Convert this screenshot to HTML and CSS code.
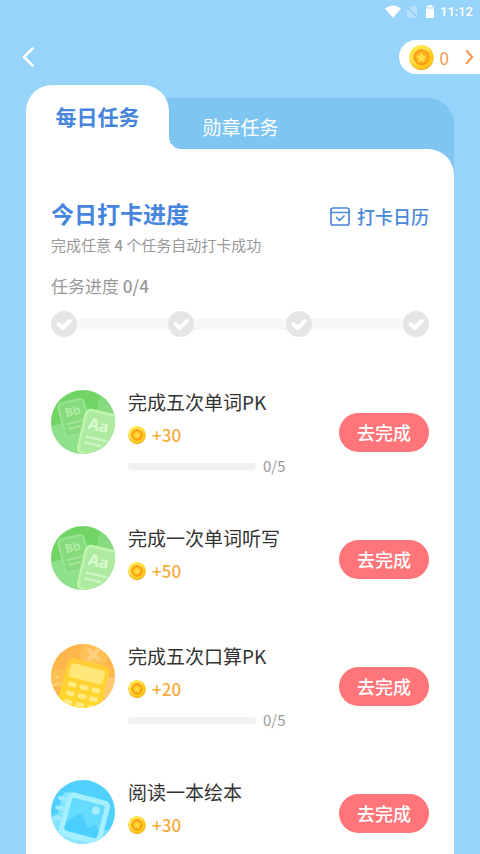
FILE: index.html
```html
<!DOCTYPE html>
<html lang="zh-CN">
<head>
<meta charset="utf-8">
<meta name="viewport" content="width=device-width, initial-scale=1">
<title>每日任务</title>
<link rel="stylesheet" href="styles.css">
</head>
<body>
<svg class="defs" aria-hidden="true">
  <defs>
    <linearGradient id="gold" x1="0" y1="0" x2="1" y2="1">
      <stop offset="0.3" stop-color="#ffe545"/>
      <stop offset="0.7" stop-color="#ffc916"/>
    </linearGradient>
    <linearGradient id="calc" x1="0" y1="0" x2="0" y2="1">
      <stop offset="0" stop-color="#ffcd38"/>
      <stop offset="1" stop-color="#ffdc24"/>
    </linearGradient>
    <clipPath id="disc"><circle cx="32" cy="32" r="32"/></clipPath>
    <symbol id="coin" viewBox="0 0 24 24">
      <circle cx="12" cy="12.5" r="11.5" fill="#e8a31c"/>
      <circle cx="12" cy="11.5" r="11.5" fill="url(#gold)"/>
      <path d="M3 15 16 2l4 3L6 19z" fill="#fff07a" opacity=".5"/>
      <circle cx="12" cy="11.800" r="6.800" fill="#fdb51d" stroke="#f99d18" stroke-width="2"/>
      <path d="m12 8 1.300 2.500 2.800.4-2 2 .4 2.800-2.500-1.300-2.500 1.300.4-2.800-2-2 2.800-.4z" fill="#ffdd45" stroke="#ffdd45" stroke-width="1" stroke-linejoin="round"/>
    </symbol>
    <symbol id="step" viewBox="0 0 26 26">
      <circle cx="13" cy="13" r="13" fill="#e5e5e5"/>
      <path d="m7.500 13 4 4 7.500-7" fill="none" stroke="#fff" stroke-width="4" stroke-linecap="round" stroke-linejoin="round"/>
    </symbol>
    <symbol id="words" viewBox="0 0 64 64">
      <g clip-path="url(#disc)">
        <path d="M0 0h64v64H0z" fill="#70d565"/>
        <circle cx="60" cy="17" r="14" fill="#85db7e"/>
        <circle cx="10" cy="54" r="20" fill="#8fe08a"/>
        <g transform="rotate(-14 6 14)">
          <rect x="6.500" y="14.500" width="26" height="34" rx="4" fill="#86db7d" stroke="#9be392" stroke-width="2"/>
          <text x="19.500" y="29" text-anchor="middle" class="glyph" fill="#b0eca5">Bb</text>
          <path d="M12 36h15M12 41h11" stroke="#a5e69b" stroke-width="2" stroke-linecap="round"/>
        </g>
        <g transform="rotate(13 36 19)">
          <rect x="36" y="19" width="32" height="44" rx="5" fill="#aeeba1" stroke="#c0f5ae" stroke-width="2.500"/>
          <text x="51" y="38" text-anchor="middle" class="glyph glyph-large" fill="#dafbd1">Aa</text>
          <path d="M42 46h20M42 52h15" stroke="#cdf7c1" stroke-width="2.500" stroke-linecap="round"/>
        </g>
      </g>
    </symbol>
    <symbol id="sums" viewBox="0 0 64 64">
      <g clip-path="url(#disc)">
        <path d="M0 0h64v64H0z" fill="#ffb74d"/>
        <circle cx="43" cy="10" r="14" fill="#ffc057"/>
        <circle cx="8" cy="34" r="9" fill="#ffc052"/>
        <circle cx="61" cy="45" r="12" fill="#ffc974"/>
        <path d="m38 6 9 9m0-9-9 9" stroke="#ffcf80" stroke-width="4" stroke-linecap="round"/>
        <path d="M2 42q6-4 10-2" fill="none" stroke="#ffd17c" stroke-width="2"/>
        <circle cx="6" cy="33" r="1.500" fill="#ffd884"/>
        <g transform="rotate(14 18 13)">
          <rect x="18" y="13" width="43" height="60" rx="6" fill="url(#calc)"/>
          <rect x="22" y="18" width="35" height="14" rx="3" fill="#ffe779"/>
          <path d="M26 39h4M38 39h4M50 39h4M26 48h4M38 48h4M50 48h4M26 57h4M38 57h4M50 57h4" stroke="#ffea83" stroke-width="5" stroke-linecap="round"/>
        </g>
      </g>
    </symbol>
    <symbol id="picture" viewBox="0 0 64 64">
      <g clip-path="url(#disc)">
        <path d="M0 0h64v64H0z" fill="#50d1fd"/>
        <circle cx="18" cy="56" r="25" fill="#8fe7ff"/>
        <path d="M30 50h34v14H30z" fill="#8fe7ff" opacity=".7"/>
        <g transform="rotate(15 18 11)">
          <rect x="13" y="12" width="12" height="46" rx="5" fill="#83e3ff"/>
          <rect x="18" y="11" width="44" height="45" rx="6" fill="#a6efff"/>
          <rect x="23" y="16" width="34" height="34" rx="3" fill="#64dbff"/>
          <path d="M23 42 33 31q3-2 5 1l8 10 4-4q2-2 4 0l3 4v5q0 3-3 3H26q-3 0-3-3z" fill="#4bcfff"/>
          <circle cx="49" cy="23" r="4" fill="#a6efff"/>
          <path d="M11 20h6M11 30h6M11 40h6" stroke="#9cebff" stroke-width="4" stroke-linecap="round"/>
        </g>
      </g>
    </symbol>
  </defs>
</svg>

<div class="status">
  <svg class="status-icon" viewBox="0 0 16 14" aria-hidden="true"><path d="M0 3.500Q8-2.500 16 3.500L8 13z" fill="#fff"/></svg>
  <svg class="status-icon sim" viewBox="0 0 12 14" aria-hidden="true"><path d="M4 1h7v12H1V4z" fill="#b5e0fc"/><path d="m0 1 12 12" stroke="#8acbf5" stroke-width="1.500"/></svg>
  <svg class="status-icon battery" viewBox="0 0 8 14" aria-hidden="true"><path d="M2 0h4v1.500h2V13H0V1.500h2z" fill="#fff"/><path d="M0 1.500h8V4H0z" fill="#d4edfd"/></svg>
  <time>11:12</time>
</div>

<header class="bar">
  <button class="back" type="button" aria-label="返回">
    <svg viewBox="0 0 12 20" aria-hidden="true"><path d="M10.500 1.500 2 10l8.500 8.500" fill="none" stroke="#fff" stroke-width="2.500" stroke-linecap="round" stroke-linejoin="round"/></svg>
  </button>
  <a class="wallet" href="#coins">
    <svg class="wallet-coin" aria-hidden="true"><use href="#coin"/></svg>
    <span>0</span>
    <svg class="wallet-arrow" viewBox="0 0 8 13" aria-hidden="true"><path d="m1.500 1 5 5.500-5 5.500" fill="none" stroke="#f09a50" stroke-width="2" stroke-linecap="round" stroke-linejoin="round"/></svg>
  </a>
</header>

<main class="sheet">
  <nav class="tabs">
    <button class="tab active" type="button">每日任务</button>
    <button class="tab" type="button">勋章任务</button>
  </nav>

  <div class="panel">
    <section class="progress">
      <div class="heading">
        <h1>今日打卡进度</h1>
        <a class="calendar" href="#calendar">
          <svg viewBox="0 0 20 19" aria-hidden="true"><g fill="none" stroke="#4a88d9" stroke-width="1.700" stroke-linecap="round" stroke-linejoin="round"><rect x="1" y="1" width="18" height="17" rx="2"/><path d="M1 5.500h18M6.500 10.500l3 3 4.500-4.500"/></g></svg>
          <span>打卡日历</span>
        </a>
      </div>
      <p class="hint">完成任意 <b>4</b> 个任务自动打卡成功</p>
      <p class="count">任务进度 <b>0/4</b></p>
      <div class="steps">
        <svg aria-hidden="true"><use href="#step"/></svg>
        <svg aria-hidden="true"><use href="#step"/></svg>
        <svg aria-hidden="true"><use href="#step"/></svg>
        <svg aria-hidden="true"><use href="#step"/></svg>
      </div>
    </section>

    <ul class="tasks">
      <li class="task">
        <svg class="badge" aria-hidden="true"><use href="#words"/></svg>
        <div class="info">
          <h2>完成五次单词PK</h2>
          <p class="reward"><svg aria-hidden="true"><use href="#coin"/></svg>+30</p>
          <p class="meter"><span class="track"></span>0/5</p>
        </div>
        <button class="go" type="button">去完成</button>
      </li>
      <li class="task">
        <svg class="badge" aria-hidden="true"><use href="#words"/></svg>
        <div class="info">
          <h2>完成一次单词听写</h2>
          <p class="reward"><svg aria-hidden="true"><use href="#coin"/></svg>+50</p>
        </div>
        <button class="go" type="button">去完成</button>
      </li>
      <li class="task">
        <svg class="badge" aria-hidden="true"><use href="#sums"/></svg>
        <div class="info">
          <h2>完成五次口算PK</h2>
          <p class="reward"><svg aria-hidden="true"><use href="#coin"/></svg>+20</p>
          <p class="meter"><span class="track"></span>0/5</p>
        </div>
        <button class="go" type="button">去完成</button>
      </li>
      <li class="task">
        <svg class="badge" aria-hidden="true"><use href="#picture"/></svg>
        <div class="info">
          <h2>阅读一本绘本</h2>
          <p class="reward"><svg aria-hidden="true"><use href="#coin"/></svg>+30</p>
        </div>
        <button class="go" type="button">去完成</button>
      </li>
    </ul>
  </div>
</main>
</body>
</html>
```

FILE: styles.css
```css
* {
  box-sizing: border-box;
}

body {
  margin: 0;
  min-height: 100vh;
  display: flex;
  flex-direction: column;
  background: #97d4fb;
  color: #333;
  font-family: "Noto Sans CJK SC", sans-serif;
}

h1, h2, p, ul {
  margin: 0;
  padding: 0;
}

button {
  border: 0;
  padding: 0;
  background: none;
  font-family: inherit;
}

a {
  text-decoration: none;
}

svg {
  display: block;
  flex: none;
}

.defs {
  position: absolute;
  width: 0;
  height: 0;
}

.glyph {
  font: bold 12px "Noto Sans", sans-serif;
}

.glyph-large {
  font-size: 16px;
}

.status {
  display: flex;
  justify-content: flex-end;
  align-items: center;
  height: 24px;
  padding-right: 7px;
  color: #fff;
  font: 500 13px/24px Roboto, sans-serif;
}

.status-icon {
  width: 16px;
  height: 14px;
}

.sim {
  width: 12px;
  margin-left: 5px;
}

.battery {
  width: 8px;
  margin: 0 6px 0 8px;
}

.bar {
  display: flex;
  justify-content: space-between;
  align-items: center;
  height: 34px;
  margin-top: 16px;
  padding-left: 22px;
}

.back svg {
  width: 12px;
  height: 20px;
}

.wallet {
  display: flex;
  align-items: center;
  height: 34px;
  padding: 0 6px 0 10px;
  border-radius: 17px 0 0 17px;
  background: #fff;
  color: #f09a50;
  font-size: 17px;
}

.wallet-coin {
  width: 25px;
  height: 25px;
  margin-right: 6px;
}

.wallet-arrow {
  width: 9px;
  height: 14px;
  margin-left: 16px;
}

.sheet {
  flex: 1;
  display: flex;
  flex-direction: column;
  margin: 11px 26px 0;
}

.tabs {
  position: relative;
  display: flex;
  height: 64px;
}

.tabs::before {
  content: "";
  position: absolute;
  inset: 13px 0 -26px 100px;
  border-radius: 0 26px 0 0;
  background: #7ec5f2;
}

.tab {
  position: relative;
  width: 143px;
  padding-top: 18px;
  color: #fff;
  font-size: 19px;
}

.active {
  padding: 0 0 2px;
  border-radius: 26px 26px 0 0;
  background: #fff;
  color: #4685de;
  font-size: 21px;
  font-weight: 700;
}

.active::after {
  content: "";
  position: absolute;
  left: 100%;
  bottom: 0;
  width: 12px;
  height: 12px;
  background: radial-gradient(circle at 100% 0, transparent 12px, #fff 12px);
}

.panel {
  position: relative;
  flex: 1;
  padding: 48px 25px 8px;
  border-radius: 0 26px 0 0;
  background: #fff;
}

.heading {
  display: flex;
  justify-content: space-between;
  align-items: flex-end;
  height: 32px;
}

.heading h1 {
  color: #4685de;
  font-size: 23px;
  line-height: 32px;
}

.calendar {
  display: flex;
  align-items: center;
  gap: 7px;
  color: #4a88d9;
  font-size: 18px;
  font-weight: 500;
}

.calendar svg {
  width: 20px;
  height: 19px;
}

.progress p {
  color: #999;
}

.progress b {
  font-weight: 500;
}

.hint {
  margin-top: 5px;
  font-size: 15px;
  line-height: 22px;
}

.count {
  margin-top: 18px;
  font-size: 17px;
  line-height: 24px;
}

.steps {
  display: flex;
  justify-content: space-between;
  margin-top: 13px;
  background: linear-gradient(#f7f7f7, #f7f7f7) center / 90% 11px no-repeat;
}

.steps svg {
  width: 26px;
  height: 26px;
}

.tasks {
  display: grid;
  gap: 52px;
  margin-top: 53px;
  list-style: none;
}

.task {
  display: flex;
  align-items: center;
  min-height: 66px;
}

.badge {
  align-self: flex-start;
  width: 64px;
  height: 64px;
}

.info {
  flex: 1;
  align-self: flex-start;
  margin-left: 13px;
}

.info h2 {
  font-size: 19px;
  font-weight: 400;
  line-height: 24px;
}

.reward {
  display: flex;
  align-items: center;
  gap: 6px;
  margin-top: 10px;
  color: #f5ab3d;
  font-size: 17px;
  font-weight: 500;
  line-height: 22px;
}

.reward svg {
  width: 18px;
  height: 18px;
}

.meter {
  display: flex;
  align-items: center;
  gap: 7px;
  margin-top: 12px;
  color: #999;
  font-size: 15px;
  line-height: 16px;
}

.track {
  width: 128px;
  height: 7px;
  border-radius: 4px;
  background: #f1f1f1;
}

.go {
  width: 90px;
  height: 39px;
  border-radius: 20px;
  background: #ff7579;
  color: #fff;
  font-size: 18px;
  font-weight: 500;
}
```
